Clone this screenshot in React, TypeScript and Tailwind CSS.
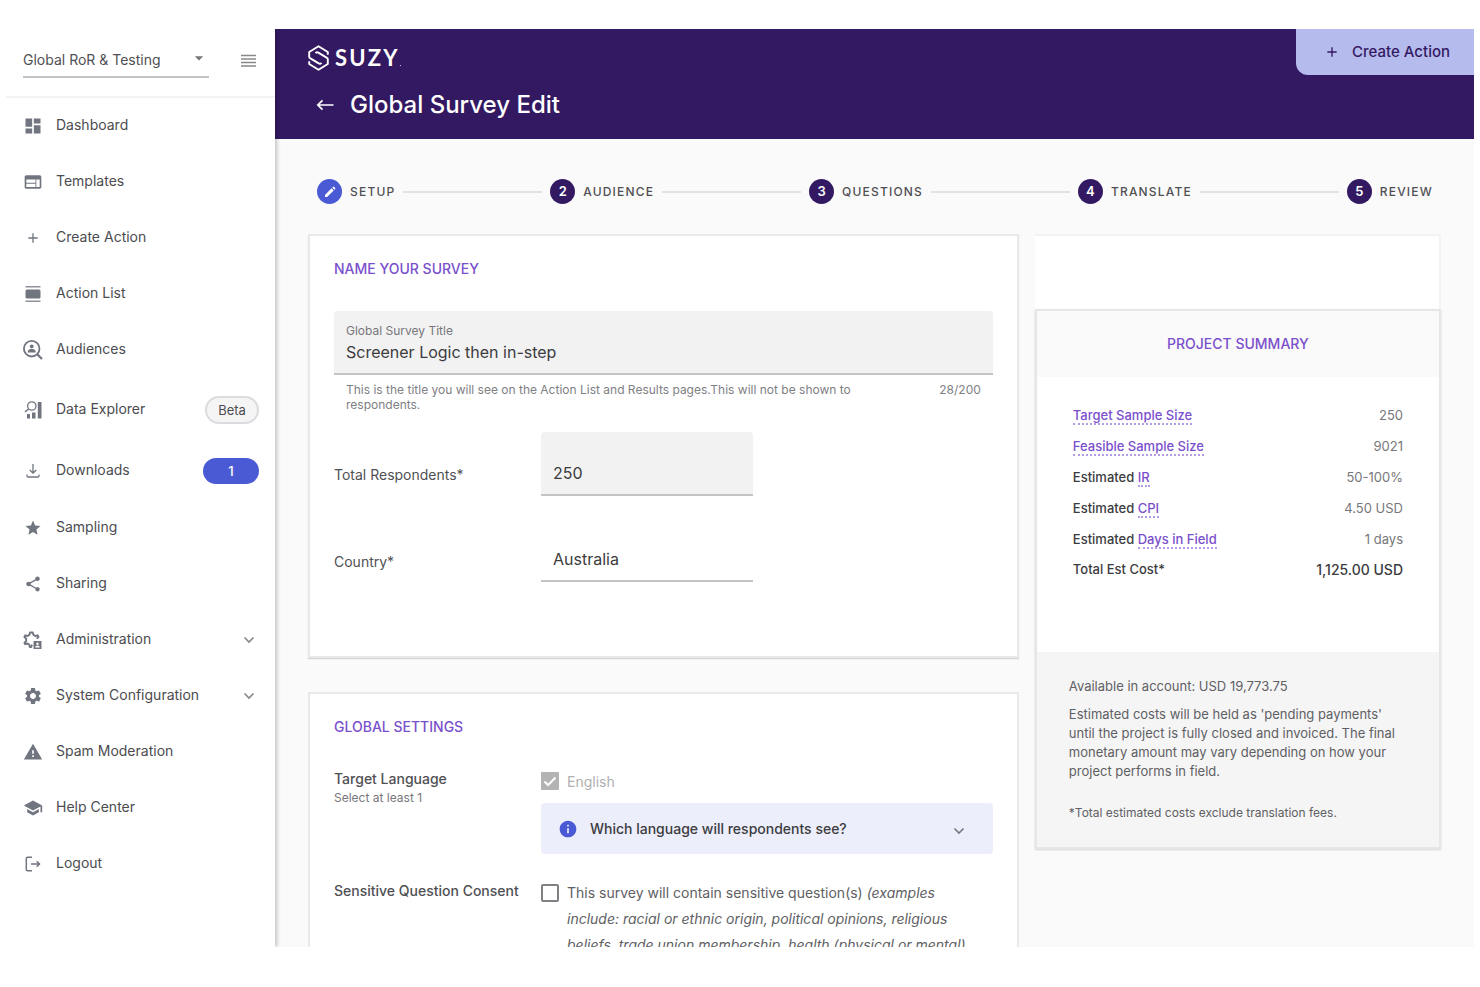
import type { ReactNode } from "react";
import {
  MdAdd,
  MdArrowDropDown,
  MdDashboard,
  MdInfo,
  MdSchool,
  MdSettings,
  MdShare,
  MdStar,
  MdWarning,
  MdWeb,
} from "react-icons/md";

function MenuIcon() {
  return (
    <svg viewBox="0 0 15 13" className="h-[13px] w-[15px]" fill="none" stroke="currentColor" strokeWidth="1.700">
      <path d="M0 1.500h15M0 5h15M0 8.500h15M0 12h15" />
    </svg>
  );
}

function ActionListIcon() {
  return (
    <svg viewBox="0 0 16 16" className="size-4" fill="currentColor">
      <path d="M.5 0h15v1.500H.5zM.5 14.500h15V16H.5z" opacity="0.8" />
      <rect x="0.500" y="3.500" width="15" height="9" rx="1.500" />
    </svg>
  );
}

function PencilIcon() {
  return (
    <svg viewBox="0 0 12 12" className="size-3" fill="white">
      <path d="M1 11V8.900L7.600 2.300l2.100 2.100L3.100 11zM8.300 1.600l.8-.8q.5-.4.9 0l1.200 1.200q.4.400 0 .9l-.8.800z" />
    </svg>
  );
}

function AudienceIcon() {
  return (
    <svg viewBox="0 0 20 20" className="size-5" fill="none" stroke="currentColor" strokeWidth="1.800">
      <circle cx="8.700" cy="8.700" r="7.800" />
      <path d="M14.200 14.200 19 19" strokeWidth="2.200" />
      <circle cx="8.700" cy="6.300" r="1.900" fill="currentColor" stroke="none" />
      <path d="M4.600 12.600c0-2.600 2-3.800 4.100-3.800s4.100 1.200 4.100 3.800z" fill="currentColor" stroke="none" />
    </svg>
  );
}

function ExplorerIcon() {
  return (
    <svg viewBox="0 0 20 20" className="size-5" fill="currentColor">
      <circle cx="8.800" cy="6" r="4.200" fill="none" stroke="currentColor" strokeWidth="1.300" />
      <path d="M5.600 9 2 11.800" stroke="currentColor" strokeWidth="1.500" />
      <path d="M4 14h3v4.500H4zM9 12.500h3.500v6H9zM14.800 2h3.700v16.500h-3.700z" />
    </svg>
  );
}

function DownloadIcon() {
  return (
    <svg viewBox="0 0 18 18" className="size-[18px]" fill="none" stroke="currentColor" strokeWidth="1.300">
      <path d="M9 2v9M5.700 8 9 11.200 12.300 8M3 12.500v1.300q0 1.200 1.200 1.200h9.600q1.200 0 1.200-1.200v-1.300" />
    </svg>
  );
}

function AdminIcon() {
  return (
    <svg viewBox="0 0 20 20" className="size-5" fill="none" stroke="currentColor">
      <path
        d="M9 14.600 8.200 17H6.800L6.200 14.500 4.400 13.500 2.200 14.200 1.400 12.800 3.200 11V8.600L1.400 7 2.300 5.300 4.500 6 6.400 4.900 7 2.500h2.800l.7 2.400 1.800 1.100 2.300-.7.900 1.700-1.800 1.600"
        strokeWidth="1.900"
        strokeLinejoin="round"
      />
      <path d="M10.500 11h8v8h-8z" fill="currentColor" stroke="none" />
      <circle cx="14.500" cy="13.700" r="1.200" fill="white" stroke="none" />
      <path d="M12.200 17.400q0-1.800 2.300-1.800t2.300 1.800z" fill="white" stroke="none" />
    </svg>
  );
}

function LogoutIcon() {
  return (
    <svg viewBox="0 0 18 18" className="size-[18px]" fill="none" stroke="currentColor" strokeWidth="1.500">
      <path d="M8 2.300H3.500Q2.300 2.300 2.300 3.500v11q0 1.200 1.200 1.200H8" />
      <path d="M7 9h8.500M12.700 6.200 15.500 9l-2.800 2.800" />
    </svg>
  );
}

function Chevron() {
  return (
    <svg viewBox="0 0 12 8" className="h-2 w-3" fill="none" stroke="currentColor" strokeWidth="1.600">
      <path d="M1.500 1.500 6 6l4.500-4.500" />
    </svg>
  );
}

type NavEntry = { label: string; icon: ReactNode; badge?: ReactNode; height?: string };

const nav: NavEntry[] = [
  { label: "Dashboard", icon: <MdDashboard className="size-5" /> },
  { label: "Templates", icon: <MdWeb className="size-5" /> },
  { label: "Create Action", icon: <MdAdd className="size-4" /> },
  { label: "Action List", icon: <ActionListIcon /> },
  { label: "Audiences", icon: <AudienceIcon /> },
  {
    label: "Data Explorer",
    icon: <ExplorerIcon />,
    height: "h-16",
    badge: (
      <span className="flex h-7 w-[54px] items-center justify-center rounded-full border-2 border-[#dcdce0] bg-[#f5f5f6] text-[13px]">
        Beta
      </span>
    ),
  },
  {
    label: "Downloads",
    icon: <DownloadIcon />,
    height: "h-[58px]",
    badge: (
      <span className="flex h-[26px] w-14 items-center justify-center rounded-full bg-[#4a5ad4] text-[13px] font-medium text-white">
        1
      </span>
    ),
  },
  { label: "Sampling", icon: <MdStar className="size-[18px]" /> },
  { label: "Sharing", icon: <MdShare className="size-[18px]" /> },
  { label: "Administration", icon: <AdminIcon />, badge: <span className="mr-1 text-[#85858a]"><Chevron /></span> },
  { label: "System Configuration", icon: <MdSettings className="size-5" />, badge: <span className="mr-1 text-[#85858a]"><Chevron /></span> },
  { label: "Spam Moderation", icon: <MdWarning className="size-5" /> },
  { label: "Help Center", icon: <MdSchool className="size-5" /> },
  { label: "Logout", icon: <LogoutIcon /> },
];

function Sidebar() {
  return (
    <aside className="relative z-10 w-[269px] shrink-0 bg-white shadow-[2px_0_4px_rgba(0,0,0,0.22)]">
      <div className="flex h-[69px] items-center justify-between border-b-2 border-[#f3f3f3] pr-[19px] pb-1 pl-[17px]">
        <div className="relative w-[186px] border-b-2 border-[#c4c4c4]">
          <select
            aria-label="Workspace"
            className="h-8 w-full appearance-none bg-transparent text-[14px] text-[#505054] outline-none"
          >
            <option>Global RoR &amp; Testing</option>
          </select>
          <MdArrowDropDown className="pointer-events-none absolute top-1 right-0 size-5 text-[#77777b]" />
        </div>
        <button aria-label="Toggle menu" className="text-[#88888c]">
          <MenuIcon />
        </button>
      </div>
      <nav>
        {nav.map((n) => (
          <a
            key={n.label}
            href="#"
            className={`flex items-center px-4 text-[14px] leading-5 text-[#4c4c50] ${n.height ?? "h-14"}`}
          >
            <span className="mr-3 flex w-[22px] justify-center text-[#717580]">{n.icon}</span>
            <span className="grow pb-0.5">{n.label}</span>
            {n.badge}
          </a>
        ))}
      </nav>
    </aside>
  );
}

function Logo() {
  return (
    <div className="flex items-center gap-1.5 text-white">
      <svg viewBox="0 0 21 26" className="h-[26px] w-[21px]" fill="none" stroke="currentColor" strokeWidth="1.900" strokeLinejoin="round">
        <path d="M19.800 9.800V7L10.500 1.300 1.200 7v4.800q0 .8.8 1.300l8.700 5.300q1.600.8 2.800-.6" />
        <path d="M1.200 16.200V19l9.300 5.700 9.300-5.700v-4.800q0-.8-.8-1.300l-8.700-5.300q-1.600-.8-2.800.6" />
      </svg>
      <span className="flex items-end">
        <span className="font-[Lato] text-[22px] leading-none font-bold tracking-widest">SUZY</span>
        <span className="mb-[3px] size-px bg-white/70" />
      </span>
    </div>
  );
}

function Header() {
  return (
    <header className="relative flex h-[110px] flex-col bg-[#331962] pt-4 pl-[33px]">
      <Logo />
      <div className="mt-[18px] flex items-center gap-4 pl-2 text-white">
        <button aria-label="Back">
          <svg viewBox="0 0 18 12" className="h-3 w-[18px]" fill="none" stroke="currentColor" strokeWidth="1.700">
            <path d="M17.500 6H2M6.500 1.300 1.800 6l4.700 4.700" />
          </svg>
        </button>
        <h1 className="text-[24px] leading-8 font-medium">Global Survey Edit</h1>
      </div>
      <button className="absolute top-0 right-0 flex h-[46px] items-center gap-3 rounded-bl-xl bg-[#b6bbee] pr-6 pl-7 text-[15px] font-medium text-[#331962]">
        <MdAdd className="size-4" />
        Create Action
      </button>
    </header>
  );
}

const steps = ["SETUP", "AUDIENCE", "QUESTIONS", "TRANSLATE", "REVIEW"];

function Stepper() {
  return (
    <ol className="flex items-center gap-2 pr-2 pl-[9px]">
      {steps.map((s, i) => (
        <li key={s} className={`flex items-center gap-2 ${i < steps.length - 1 ? "grow" : ""}`}>
          <span
            className={`flex size-[25px] shrink-0 items-center justify-center rounded-full text-[13px] font-semibold text-white ${
              i === 0 ? "bg-[#4a5ad4]" : "bg-[#331962]"
            }`}
          >
            {i === 0 ? <PencilIcon /> : i + 1}
          </span>
          <span className="text-[12px] font-medium tracking-widest text-[#505054]">{s}</span>
          {i < steps.length - 1 && <span className="h-0.5 grow bg-[#e2e2e2]" />}
        </li>
      ))}
    </ol>
  );
}

function Card({ title, children, className }: { title: string; children: ReactNode; className: string }) {
  return (
    <section className={`border-2 border-[#e9e9e9] bg-white px-6 pt-[23px] ${className}`}>
      <h2 className="text-[14px] leading-5 font-medium text-[#7a50cc]">{title}</h2>
      {children}
    </section>
  );
}

function NameCard() {
  return (
    <Card title="NAME YOUR SURVEY" className="pb-[74px] shadow-[0_1px_1px_rgba(0,0,0,0.15)]">
      <div className="mt-8 rounded-t border-b-2 border-[#c4c4c4] bg-[#f2f2f2] px-3 pt-3 pb-2">
        <label htmlFor="title" className="block text-[12px] leading-4 text-[#77777b]">
          Global Survey Title
        </label>
        <input
          id="title"
          defaultValue="Screener Logic then in-step"
          className="block h-[26px] w-full bg-transparent text-[16px] text-[#3c3c40] outline-none"
        />
      </div>
      <div className="mt-[7px] flex justify-between gap-14 px-3 text-[12px] leading-[15px] text-[#808084]">
        <p>This is the title you will see on the Action List and Results pages.This will not be shown to respondents.</p>
        <span>28/200</span>
      </div>
      <div className="mt-5 flex items-center">
        <label htmlFor="total" className="w-[207px] pt-5 text-[14px] text-[#505054]">
          Total Respondents*
        </label>
        <input
          id="total"
          defaultValue="250"
          className="h-16 w-[212px] rounded-t border-b-2 border-[#c4c4c4] bg-[#f2f2f2] px-3 pt-5 text-[16px] text-[#3c3c40] outline-none"
        />
      </div>
      <div className="mt-[42px] flex items-center">
        <label htmlFor="country" className="w-[207px] pt-0.5 text-[14px] text-[#505054]">
          Country*
        </label>
        <select
          id="country"
          defaultValue="Australia"
          className="h-11 w-[212px] appearance-none border-b-2 border-[#c4c4c4] bg-transparent px-3 text-[16px] text-[#3c3c40] outline-none"
        >
          <option>Australia</option>
        </select>
      </div>
    </Card>
  );
}

function SettingsCard() {
  return (
    <Card title="GLOBAL SETTINGS" className="mt-[34px] pb-10">
      <div className="mt-8 flex">
        <div className="w-[207px] shrink-0">
          <p className="text-[14px] leading-5 font-medium text-[#505054]">Target Language</p>
          <p className="text-[12px] leading-[18px] text-[#77777b]">Select at least 1</p>
        </div>
        <div className="grow">
          <label className="flex h-6 items-center gap-2 text-[14px] text-[#b0b0b3]">
            <span className="relative flex">
              <input type="checkbox" defaultChecked disabled className="size-[18px] appearance-none rounded-[1px] bg-[#b3b3b3]" />
              <svg viewBox="0 0 18 18" className="absolute inset-0" fill="none" stroke="white" strokeWidth="2">
                <path d="m3.500 9.500 3.600 3.500 7.400-7.500" />
              </svg>
            </span>
            English
          </label>
          <button className="mt-[10px] flex h-[51px] w-full items-center gap-3 rounded bg-[#edeefb] pr-7 pl-[17px] text-[14px] font-medium text-[#3c3c40]">
            <MdInfo className="size-5 text-[#4a5ad4]" />
            <span className="grow text-left">Which language will respondents see?</span>
            <span className="pt-1 text-[#77777b]">
              <Chevron />
            </span>
          </button>
        </div>
      </div>
      <div className="mt-[26px] flex">
        <p className="w-[207px] shrink-0 text-[14px] leading-[22px] font-medium text-[#505054]">Sensitive Question Consent</p>
        <label className="flex gap-2 pr-2.5 text-[14px] leading-[26px] text-[#606064]">
          <input type="checkbox" className="mt-1 size-[18px] shrink-0 appearance-none rounded-[2px] border-2 border-[#808084]" />
          <span>
            This survey will contain sensitive question(s){" "}
            <em>
              (examples include: racial or ethnic origin, political opinions, religious beliefs, trade union membership,
              health (physical or mental)
            </em>
          </span>
        </label>
      </div>
    </Card>
  );
}

const rows = [
  { pre: "", link: "Target Sample Size", value: "250" },
  { pre: "", link: "Feasible Sample Size", value: "9021" },
  { pre: "Estimated ", link: "IR", value: "50-100%" },
  { pre: "Estimated ", link: "CPI", value: "4.50 USD" },
  { pre: "Estimated ", link: "Days in Field", value: "1 days" },
];

function Summary() {
  return (
    <aside>
      <div className="h-[75px] border-t-2 border-r-2 border-[#f3f3f3] bg-white" />
      <section className="border-2 border-[#e6e6e6] bg-white shadow-[0_1px_2px_rgba(0,0,0,0.15)]">
        <h2 className="bg-[#fafafa] py-[23px] text-center text-[14px] leading-5 font-medium text-[#7a50cc]">PROJECT SUMMARY</h2>
        <div className="px-9 pt-[23px] pb-[68px]">
          <table className="w-full text-[13px] text-[#3c3c40]">
            <tbody>
              {rows.map((r) => (
                <tr key={r.link} className="h-[31px]">
                  <th scope="row" className="text-left font-medium">
                    {r.pre}
                    <a href="#" className="border-b-2 border-dotted border-[#b49be6] text-[#7a50cc]">
                      {r.link}
                    </a>
                  </th>
                  <td className="text-right text-[#77777b]">{r.value}</td>
                </tr>
              ))}
              <tr className="h-[29px]">
                <th scope="row" className="text-left font-medium">Total Est Cost*</th>
                <td className="text-right text-[14px] font-medium">1,125.00 USD</td>
              </tr>
            </tbody>
          </table>
        </div>
        <div className="bg-[#f5f5f5] px-8 py-[25px] text-[13px] leading-[19px] text-[#606064]">
          <p>Available in account: USD 19,773.75</p>
          <p className="mt-[9px]">
            Estimated costs will be held as 'pending payments' until the project is fully closed and invoiced. The final
            monetary amount may vary depending on how your project performs in field.
          </p>
          <p className="mt-[22px] text-[12px]">*Total estimated costs exclude translation fees.</p>
        </div>
      </section>
    </aside>
  );
}

export default function App() {
  return (
    <div className="h-screen bg-white px-1.5 pt-[29px] pb-10 font-[Inter,sans-serif]">
      <div className="flex h-full overflow-hidden">
        <Sidebar />
        <div className="min-w-0 grow bg-[#fafafa]">
          <Header />
          <main className="px-[33px] pt-10">
            <Stepper />
            <div className="mt-[30px] grid grid-cols-[7fr_4fr] gap-4">
              <div>
                <NameCard />
                <SettingsCard />
              </div>
              <Summary />
            </div>
          </main>
        </div>
      </div>
    </div>
  );
}
